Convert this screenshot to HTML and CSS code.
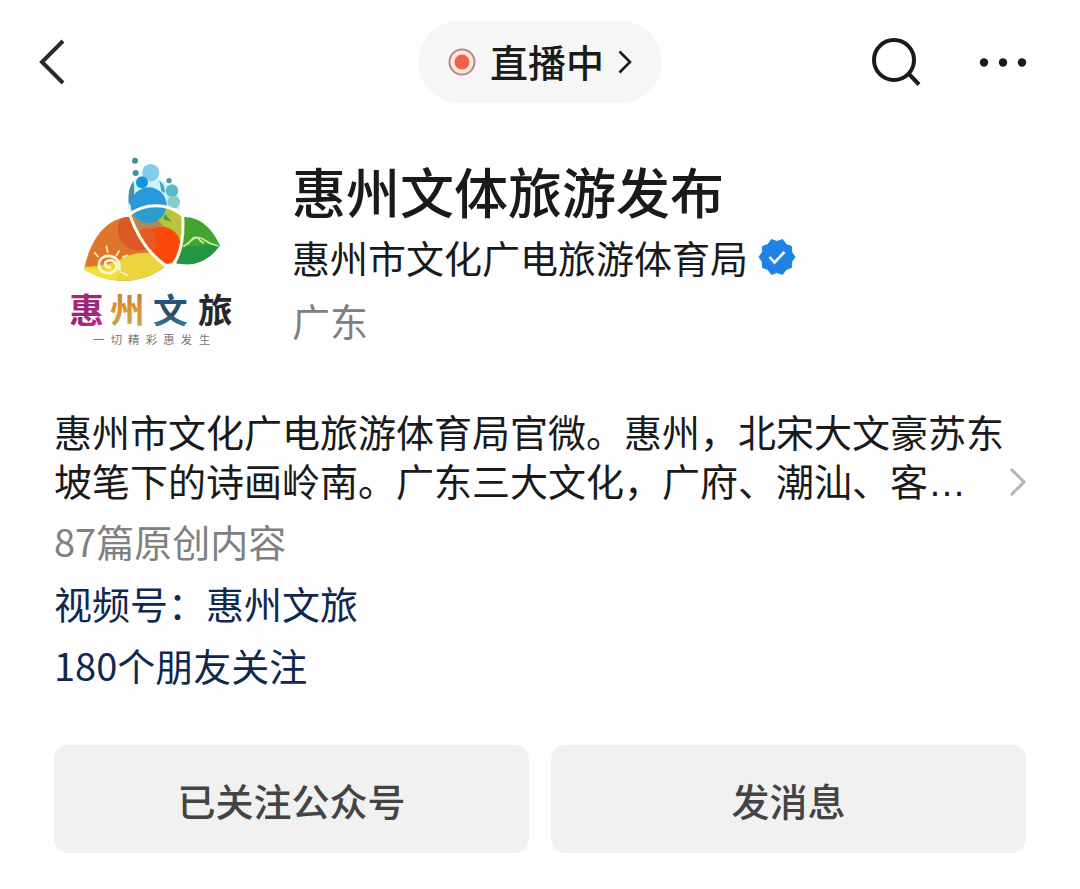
FILE: index.html
```html
<!DOCTYPE html>
<html lang="zh-CN">
<head>
    <meta charset="UTF-8">
    <meta name="viewport" content="width=device-width, initial-scale=1.0">
    <title>惠州文体旅游发布</title>
    <link rel="stylesheet" href="styles.css">
</head>
<body>

    <header class="topbar">
        <button class="icon-btn back" type="button" aria-label="返回">
            <svg width="28" height="48" viewBox="0 0 28 48" fill="none" stroke="#2b2b2b" stroke-width="4">
                <path d="M25 3 4 24l21 21"/>
            </svg>
        </button>
        <button class="live" type="button">
            <svg width="28" height="28" viewBox="0 0 28 28">
                <circle cx="14" cy="14" r="12.5" fill="#fdeae0" stroke="#c08484" stroke-width="2"/>
                <circle cx="14" cy="14" r="7.5" fill="#f0604a"/>
            </svg>
            <span>直播中</span>
            <svg width="14" height="24" viewBox="0 0 14 24" fill="none" stroke="#1a1a1a" stroke-width="2.6">
                <path d="M1.5 1.5 12 12 1.5 22.5"/>
            </svg>
        </button>
        <div class="actions">
            <button class="icon-btn" type="button" aria-label="搜索">
                <svg width="50" height="50" viewBox="0 0 50 50" fill="none" stroke="#1a1a1a" stroke-width="4">
                    <circle cx="23" cy="23" r="20"/>
                    <path d="M37 36 48 47.500"/>
                </svg>
            </button>
            <button class="icon-btn" type="button" aria-label="更多">
                <svg width="48" height="10" viewBox="0 0 48 10" fill="#1a1a1a">
                    <circle cx="5" cy="5.500" r="4.200"/>
                    <circle cx="24" cy="5.500" r="4.200"/>
                    <circle cx="43" cy="5.500" r="4.200"/>
                </svg>
            </button>
        </div>
    </header>

    <main>
        <section class="profile">
            <svg class="logo" viewBox="0 0 600 660" role="img" aria-label="惠州文旅">
                <defs>
                    <clipPath id="leaf-left">
                        <path d="M102 388C122 295 168 235 238 230C262 295 296 345 345 380C280 432 180 438 102 388Z"/>
                    </clipPath>
                    <clipPath id="leaf-mid">
                        <path d="M238 226C285 188 350 188 395 226C402 290 392 335 372 368Q360 374 345 370C296 330 262 290 238 226Z"/>
                    </clipPath>
                    <linearGradient id="hui" x1="0" y1="0" x2="1" y2="1">
                        <stop offset="0" stop-color="#d0207e"/>
                        <stop offset="0.5" stop-color="#8d2a72"/>
                        <stop offset="1" stop-color="#d52a9a"/>
                    </linearGradient>
                    <linearGradient id="zhou" x1="0" y1="0" x2="0" y2="1">
                        <stop offset="0" stop-color="#9a7a50"/>
                        <stop offset="0.5" stop-color="#e2922e"/>
                        <stop offset="1" stop-color="#b5ad55"/>
                    </linearGradient>
                    <linearGradient id="wen" x1="0" y1="0" x2="0" y2="1">
                        <stop offset="0" stop-color="#23639b"/>
                        <stop offset="0.6" stop-color="#2b4a66"/>
                        <stop offset="1" stop-color="#3b9bb0"/>
                    </linearGradient>
                </defs>

                <!-- water -->
                <path d="M236 212C230 170 238 140 250 122C285 105 330 110 350 135C385 145 392 180 390 212Q315 170 236 212Z" fill="#c9f4fb"/>
                <path d="M236 190Q232 145 250 124Q258 160 244 196Z" fill="#4b8fa5"/>
                <path d="M328 122Q348 135 343 160L334 152Z" fill="#4aa4b8"/>
                <circle cx="255" cy="62" r="9" fill="#3f8ca3"/>
                <circle cx="257" cy="99" r="9" fill="#3c91a6"/>
                <circle cx="302" cy="98" r="26" fill="#83cdec"/>
                <circle cx="276" cy="127" r="18" fill="#1595d8"/>
                <circle cx="357" cy="122" r="8" fill="#4c9aa0"/>
                <circle cx="366" cy="152" r="19" fill="#5bb9cd"/>
                <circle cx="371" cy="186" r="19" fill="#86cbc6"/>
                <circle cx="296" cy="196" r="54" fill="#2899dc"/>

                <!-- left leaf: sun and beach -->
                <g clip-path="url(#leaf-left)">
                    <path d="M90 210h270v240H90z" fill="#e0762e"/>
                    <circle cx="265" cy="270" r="62" fill="#d95a26"/>
                    <path d="M95 382Q190 375 225 350Q280 330 330 345L360 400V450H90Z" fill="#e9d63c"/>
                    <path d="M95 375Q150 400 215 380L190 440H90Z" fill="#f3df3a"/>
                </g>
                <path d="M180 382C164 384 160 366 174 362C194 357 206 375 196 390C184 406 150 402 147 378C145 356 164 344 184 349C202 353 212 370 208 388" fill="none" stroke="#fff6cf" stroke-width="8" stroke-linecap="round"/>
                <path d="M134 338 144 350M169 319 173 336M207 333 199 347M218 352 232 346M213 396 232 406" stroke="#fff1c0" stroke-width="5" stroke-linecap="round"/>

                <!-- middle leaf -->
                <g clip-path="url(#leaf-mid)">
                    <path d="M220 180h190v210H220z" fill="#b6c53a"/>
                    <path d="M230 220h75l55 60-55 80z" fill="#b48959"/>
                    <circle cx="296" cy="196" r="53" fill="#2e9bd3"/>
                    <path d="M345 222 365 246 340 238Z" fill="#4d9d48"/>
                    <circle cx="334" cy="318" r="58" fill="#fc4808"/>
                    <path d="M270 270Q310 250 318 300Q318 340 300 350L265 310Z" fill="#e85a22"/>
                </g>

                <!-- right leaf: mountain -->
                <path d="M400 231C450 230 486 265 510 316C475 365 430 380 379 370C397 330 402 280 400 231Z" fill="#44a52e"/>
                <path d="M396 325Q455 310 510 316C475 365 430 380 379 370Z" fill="#229642"/>
                <path d="M400 320Q418 308 430 294Q440 287 451 302L461 310M412 313Q440 280 463 300Q480 312 505 318" fill="none" stroke="#cdf0a8" stroke-width="5"/>

                <path d="M234 226C285 188 350 188 398 226C402 290 392 340 372 370M238 222C262 290 300 345 348 378" fill="none" stroke="#fffbe8" stroke-width="9"/>

                <g class="logo-name">
                    <text x="58" y="549" fill="url(#hui)">惠</text>
                    <text x="180" y="549" fill="url(#zhou)">州</text>
                    <text x="309" y="549" fill="url(#wen)">文</text>
                    <text x="444" y="549" fill="#26262e">旅</text>
                </g>
                <text class="logo-slogan" x="129 182 234 287 340 392 447" y="611">一切精彩惠发生</text>
            </svg>
            <div class="info">
                <h1 class="name">惠州文体旅游发布</h1>
                <p class="org">
                    惠州市文化广电旅游体育局
                    <svg width="38" height="38" viewBox="-19 -19 38 38" role="img" aria-label="已认证">
                        <path d="M0-15.500 5.500-17.500 9.100-12.500 14.500-10.500 14.700-4.800 18 0 14.700 4.800 14.500 10.500 9.100 12.500 5.500 17.500 0 15.500-5.500 17.500-9.100 12.500-14.500 10.500-14.700 4.800-18 0-14.700-4.800-14.500-10.500-9.100-12.500-5.500-17.500Z" fill="#1e83e2" stroke="#1e83e2" stroke-linejoin="round"/>
                        <path d="M-7.500 0-2.500 5.500 7.500-5" fill="none" stroke="#fff" stroke-width="2.600"/>
                    </svg>
                </p>
                <p class="region">广东</p>
            </div>
        </section>

        <section class="about">
            <a class="intro" href="#">
                <span class="intro-text">惠州市文化广电旅游体育局官微。惠州，北宋大文豪苏东坡笔下的诗画岭南。广东三大文化，广府、潮汕、客…</span>
                <svg width="20" height="32" viewBox="0 0 20 32" fill="none" stroke="#b5b5b5" stroke-width="3">
                    <path d="M3 3 16 16 3 29"/>
                </svg>
            </a>
            <p class="meta">87篇原创内容</p>
            <p class="meta"><a href="#">视频号：惠州文旅</a></p>
            <p class="meta"><a href="#">180个朋友关注</a></p>
        </section>

        <div class="buttons">
            <button class="btn" type="button">已关注公众号</button>
            <button class="btn" type="button">发消息</button>
        </div>
    </main>

</body>
</html>
```
FILE: styles.css
```css
* {
    box-sizing: border-box;
}
body {
    margin: 0;
    background-color: #fefefe;
    color: #1a1a1a;
    font-family: "Noto Sans CJK SC", sans-serif;
    font-size: 38px;
}
h1, p {
    margin: 0;
}
a {
    color: #10284f;
    text-decoration: none;
}
button {
    border: 0;
    padding: 0;
    background: none;
    color: inherit;
    font: inherit;
    cursor: pointer;
}
svg {
    display: block;
    flex: none;
}

/* top bar */
.topbar {
    display: grid;
    grid-template-columns: 1fr auto 1fr;
    align-items: center;
    padding: 21px 38px 0;
}
.back {
    justify-self: start;
}
.live {
    display: flex;
    align-items: center;
    gap: 14px;
    height: 82px;
    padding: 0 30px;
    border-radius: 41px;
    background-color: #f6f6f6;
    font-weight: 500;
}
.live span {
    padding-bottom: 4px;
}
.actions {
    display: flex;
    align-items: center;
    justify-content: flex-end;
    gap: 58px;
    padding-right: 15px;
}

/* account */
.profile {
    display: flex;
    align-items: flex-start;
    gap: 42px;
    padding: 37px 50px 0;
}
.logo {
    width: 200px;
    height: 220px;
}
.logo-name {
    font-size: 104px;
    font-weight: 700;
}
.logo-slogan {
    font-size: 34px;
    fill: #77777b;
}
.info {
    padding-top: 15px;
}
.name {
    font-size: 54px;
    font-weight: 500;
    line-height: 72px;
}
.org {
    display: flex;
    align-items: center;
    gap: 10px;
    line-height: 60px;
}
.region {
    color: #808080;
    line-height: 66px;
}

/* description */
.about {
    padding: 50px 52px 0 54px;
}
.intro {
    display: flex;
    align-items: flex-end;
    justify-content: space-between;
    margin-bottom: 2px;
    color: #1a1a1a;
    line-height: 49px;
}
/* Liberation Sans first: keeps the ellipsis on the baseline */
.intro-text {
    max-width: 952px;
    margin-right: -18px;
    font-family: "Liberation Sans", "Noto Sans CJK SC", sans-serif;
}
.intro svg {
    margin-bottom: 10px;
}
.meta {
    color: #808080;
    line-height: 62px;
}

.buttons {
    display: grid;
    grid-template-columns: 1fr 1fr;
    gap: 22px;
    padding: 49px 54px 36px;
}
.btn {
    height: 108px;
    border-radius: 14px;
    background-color: #f1f1f1;
    color: #444;
    font-weight: 500;
}
```
